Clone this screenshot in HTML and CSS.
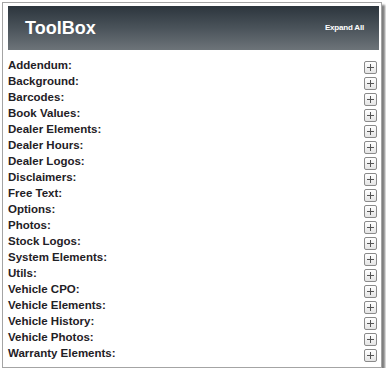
FILE: index.html
```html
<!DOCTYPE html>
<html>
<head>
<meta charset="utf-8">
<link rel="stylesheet" href="styles.css">
</head>
<body>
<div class="popup">
  <div class="header">
    <span class="title">ToolBox</span>
    <span class="expand">Expand All</span>
  </div>
  <ul class="list">
    <li class="row"><span class="label">Addendum:</span><span class="plus"></span></li>
    <li class="row"><span class="label">Background:</span><span class="plus"></span></li>
    <li class="row"><span class="label">Barcodes:</span><span class="plus"></span></li>
    <li class="row"><span class="label">Book Values:</span><span class="plus"></span></li>
    <li class="row"><span class="label">Dealer Elements:</span><span class="plus"></span></li>
    <li class="row"><span class="label">Dealer Hours:</span><span class="plus"></span></li>
    <li class="row"><span class="label">Dealer Logos:</span><span class="plus"></span></li>
    <li class="row"><span class="label">Disclaimers:</span><span class="plus"></span></li>
    <li class="row"><span class="label">Free Text:</span><span class="plus"></span></li>
    <li class="row"><span class="label">Options:</span><span class="plus"></span></li>
    <li class="row"><span class="label">Photos:</span><span class="plus"></span></li>
    <li class="row"><span class="label">Stock Logos:</span><span class="plus"></span></li>
    <li class="row"><span class="label">System Elements:</span><span class="plus"></span></li>
    <li class="row"><span class="label">Utils:</span><span class="plus"></span></li>
    <li class="row"><span class="label">Vehicle CPO:</span><span class="plus"></span></li>
    <li class="row"><span class="label">Vehicle Elements:</span><span class="plus"></span></li>
    <li class="row"><span class="label">Vehicle History:</span><span class="plus"></span></li>
    <li class="row"><span class="label">Vehicle Photos:</span><span class="plus"></span></li>
    <li class="row"><span class="label">Warranty Elements:</span><span class="plus"></span></li>
  </ul>
</div>
</body>
</html>
```
FILE: styles.css
```css
html, body {
  margin: 0;
  padding: 0;
  background: #ffffff;
}
body {
  padding: 2px 0 0 2px;
  font-family: "Liberation Sans", Arial, sans-serif;
}
.popup {
  width: 371px;
  height: 359px;
  border: 1px solid #a4a4a4;
  padding: 3px 2px 2px 5px;
  background: #ffffff;
  box-shadow: 3px 3px 2px rgba(0, 0, 0, 0.5);
}
.header {
  height: 44px;
  background: linear-gradient(to bottom, #2c353d 0%, #4a535a 50%, #6d7479 100%);
  display: flex;
  align-items: center;
  justify-content: space-between;
  padding: 0 15px 0 17px;
}
.title {
  color: #ffffff;
  font-weight: bold;
  font-size: 18px;
  margin-top: 1px;
}
.expand {
  color: #ffffff;
  font-weight: bold;
  font-size: 8px;
  letter-spacing: -0.2px;
  margin-top: -2px;
}
.list {
  list-style: none;
  margin: 0;
  padding: 7px 0 0 0;
}
.row {
  height: 16px;
  display: flex;
  align-items: center;
  justify-content: space-between;
  padding-right: 2px;
}
.label {
  font-size: 11.5px;
  font-weight: bold;
  color: #1f2126;
  margin-top: -1px;
}
.plus {
  position: relative;
  width: 11px;
  height: 11px;
  border: 1px solid #8a8a8a;
  border-radius: 2px;
  background: linear-gradient(to bottom, #ffffff 0%, #e4e4e4 100%);
  margin-top: 5px;
}
.plus::before,
.plus::after {
  content: "";
  position: absolute;
  background: #555555;
}
.plus::before {
  left: 2px;
  right: 2px;
  top: 5px;
  height: 1px;
}
.plus::after {
  top: 2px;
  bottom: 2px;
  left: 5px;
  width: 1px;
}
```
